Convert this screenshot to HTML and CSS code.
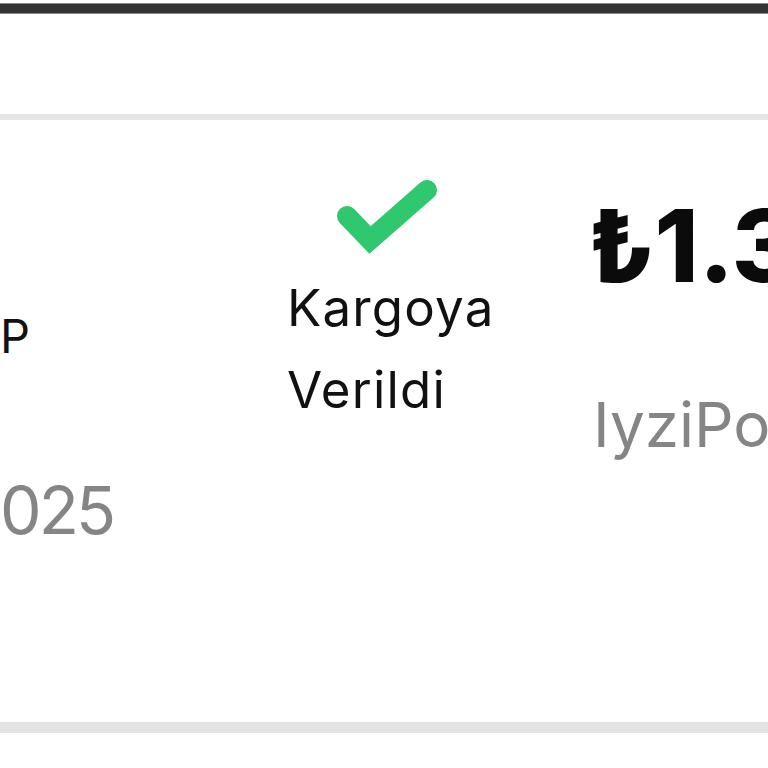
FILE: index.html
```html
<!DOCTYPE html>
<html lang="tr">
<head>
<meta charset="utf-8">
<title>Sipariş</title>
<link rel="stylesheet" href="styles.css">
</head>
<body>
<div class="topbar"></div>
<div class="header"></div>
<div class="row">
  <div class="cell cell-order">
    <div class="order-code">P</div>
    <div class="order-date">025</div>
  </div>
  <div class="cell cell-status">
    <svg class="check" viewBox="0 0 100 76" width="100" height="76" aria-hidden="true">
      <path d="M10 36 L33 60 L90 10" fill="none" stroke="#2fc86e" stroke-width="20" stroke-linecap="round" stroke-linejoin="miter"/>
    </svg>
    <div class="status-text">Kargoya<br>Verildi</div>
  </div>
  <div class="cell cell-amount">
    <div class="amount">₺1.349,90</div>
    <div class="method">IyziPos</div>
  </div>
</div>
</body>
</html>
```
FILE: styles.css
```css
html, body {
  margin: 0;
  padding: 0;
  background: #fff;
}
body {
  font-family: "Inter", "DejaVu Sans", sans-serif;
  color: #111;
  overflow: hidden;
}
.topbar {
  margin-top: 3px;
  height: 9px;
  background: #353535;
  border-top: 1px solid #8a8a8a;
  border-bottom: 1px solid #8a8a8a;
}
.header {
  height: 100px;
}
.row {
  height: 602px;
  border-top: 6px solid #e6e6e6;
  border-bottom: 11px solid #e3e3e3;
  display: grid;
  grid-template-columns: 287px 306px 1fr;
  overflow: hidden;
}
.cell {
  display: flex;
  flex-direction: column;
  white-space: nowrap;
  overflow: hidden;
}
.cell-order {
  padding-top: 192px;
}
.order-code {
  font-size: 47px;
  line-height: 48px;
}
.order-date {
  margin-top: 116px;
  font-size: 66px;
  line-height: 68px;
  letter-spacing: -3px;
  color: #858585;
}
.cell-status {
  padding-top: 60px;
}
.check {
  display: block;
  margin-left: 50px;
}
.status-text {
  margin-top: 11px;
  font-size: 51px;
  line-height: 82px;
  letter-spacing: 1.2px;
}
.cell-amount {
  padding-top: 76px;
}
.amount {
  margin-left: -5px;
  font-size: 100px;
  line-height: 100px;
  font-weight: 800;
  color: #0b0b0b;
}
.method {
  margin-top: 98px;
  font-size: 62px;
  line-height: 62px;
  color: #858585;
}
```
